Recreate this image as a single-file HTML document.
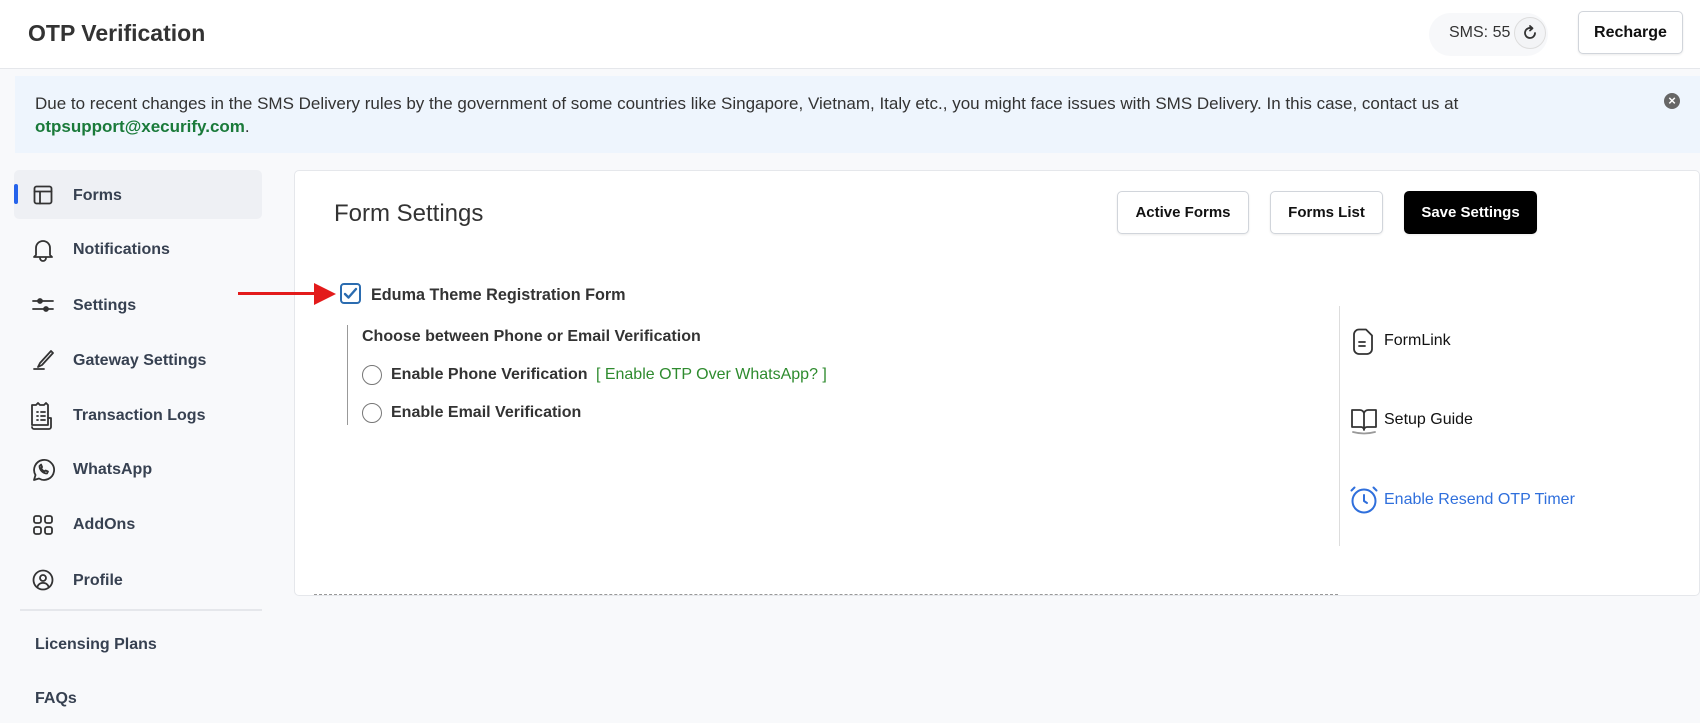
<!DOCTYPE html>
<html><head><meta charset="utf-8"><style>
*{box-sizing:border-box;margin:0;padding:0}
body{width:1700px;height:723px;background:#f8f9fb;font-family:"Liberation Sans",sans-serif;color:#374151;position:relative;overflow:hidden}
.a{position:absolute}
.hdr{left:0;top:0;width:1700px;height:69px;background:#fff;border-bottom:1px solid #e5e7eb}
.nav{font-size:16px;font-weight:bold;color:#374151}
.btn{position:absolute;border:1px solid #d1d5db;border-radius:5px;background:#fff;font-weight:bold;font-size:15px;color:#111;display:flex;align-items:center;justify-content:center;box-shadow:0 1px 2px rgba(0,0,0,.08)}
svg{position:absolute;fill:none;stroke:#333;stroke-width:1.8;stroke-linecap:round;stroke-linejoin:round}
</style></head><body>
<div class="a hdr"></div>
<div class="a" style="left:28px;top:20px;font-size:23px;font-weight:bold;color:#333">OTP Verification</div>
<div class="a" style="left:1429px;top:13px;width:119px;height:43px;border-radius:22px;background:#f7f8fa"></div>
<div class="a" style="left:1449px;top:24px;font-size:16px;color:#333">SMS: 55</div>
<div class="a" style="left:1514px;top:17px;width:32px;height:32px;border-radius:50%;border:1px solid #ddd;background:#f3f4f6"></div>
<svg style="left:1520px;top:23px" width="20" height="20" viewBox="0 0 20 20"><path d="M15 10a5 5 0 1 1-3-4.6"/><path d="M10 3l2.5 2.3L10 7.5"/></svg>
<div class="btn" style="left:1578px;top:11px;width:105px;height:43px;font-size:16px">Recharge</div>

<div class="a" style="left:15px;top:76px;width:1685px;height:77px;background:#eef5fd"></div>
<div class="a" style="left:35px;top:92px;width:1520px;font-size:17px;line-height:23px;color:#333">Due to recent changes in the SMS Delivery rules by the government of some countries like Singapore, Vietnam, Italy etc., you might face issues with SMS Delivery. In this case, contact us at<br><span style="color:#1a7a3a;font-weight:bold">otpsupport@xecurify.com</span>.</div>
<div class="a" style="left:1664px;top:93px;width:16px;height:16px;border-radius:50%;background:#666;color:#fff;font-size:13px;line-height:16px;text-align:center;font-weight:bold">×</div>

<div class="a" style="left:14px;top:170px;width:248px;height:49px;background:#eef0f4;border-radius:5px"></div>
<div class="a" style="left:14px;top:184px;width:4px;height:20px;background:#2563eb;border-radius:2px"></div>
<svg style="left:33px;top:185px" width="20" height="20" viewBox="0 0 20 20"><rect x="1.5" y="1.5" width="17" height="17" rx="2"/><path d="M1.5 6.5h17M7 6.5v12"/></svg>
<div class="a nav" style="left:73px;top:187px">Forms</div>
<svg style="left:32px;top:238px" width="22" height="24" viewBox="0 0 22 24"><path d="M4 17V10a7 7 0 0 1 14 0v7l2 2H2z"/><path d="M8 20a3 3 0 0 0 6 0"/></svg>
<div class="a nav" style="left:73px;top:241px">Notifications</div>
<svg style="left:32px;top:295px" width="22" height="20" viewBox="0 0 22 20"><path d="M1 6h20M1 14h20"/><circle cx="8" cy="6" r="2" fill="#333"/><circle cx="14" cy="14" r="2" fill="#333"/></svg>
<div class="a nav" style="left:73px;top:297px">Settings</div>
<svg style="left:32px;top:349px" width="22" height="22" viewBox="0 0 22 22"><path d="M19 2L8 14l-2 4 4-2L21 4z"/><path d="M2 20h10"/></svg>
<div class="a nav" style="left:73px;top:352px">Gateway Settings</div>
<svg style="left:29px;top:402px" width="26" height="28" viewBox="0 0 26 28"><path d="M3 3h4l2-2 2 2h4l2-2 2 2v20H3z"/><path d="M19 16h3v9a2 2 0 0 1-2 2H5a2 2 0 0 1-2-2"/><path d="M8 10h1M12 10h4M8 14h1M12 14h4M8 18h1M12 18h4"/></svg>
<div class="a nav" style="left:73px;top:407px">Transaction Logs</div>
<svg style="left:31px;top:458px" width="24" height="24" viewBox="0 0 24 24"><path d="M3 22l1.5-5A10 10 0 1 1 8 20.5z"/><path d="M8.5 8c0 4 3.5 7.5 7.5 7.5l1-2-2.5-1-1 1c-1.5-.7-2.7-1.9-3.4-3.4l1-1-1-2.5z"/></svg>
<div class="a nav" style="left:73px;top:461px">WhatsApp</div>
<svg style="left:33px;top:515px" width="20" height="20" viewBox="0 0 20 20"><rect x="1" y="1" width="7" height="7" rx="2"/><rect x="12" y="1" width="7" height="7" rx="2"/><rect x="1" y="12" width="7" height="7" rx="2"/><rect x="12" y="12" width="7" height="7" rx="2"/></svg>
<div class="a nav" style="left:73px;top:516px">AddOns</div>
<svg style="left:32px;top:569px" width="22" height="22" viewBox="0 0 22 22"><circle cx="11" cy="11" r="9.5"/><circle cx="11" cy="9" r="3"/><path d="M5.5 17.5a6 6 0 0 1 11 0"/></svg>
<div class="a nav" style="left:73px;top:572px">Profile</div>
<div class="a" style="left:20px;top:609px;width:242px;height:2px;background:#e5e7eb"></div>
<div class="a nav" style="left:35px;top:636px">Licensing Plans</div>
<div class="a nav" style="left:35px;top:690px">FAQs</div>

<div class="a" style="left:294px;top:170px;width:1406px;height:426px;background:#fff;border:1px solid #e5e7eb;border-radius:5px"></div>
<div class="a" style="left:334px;top:200px;font-size:24px;color:#333">Form Settings</div>
<div class="btn" style="left:1117px;top:191px;width:132px;height:43px">Active Forms</div>
<div class="btn" style="left:1270px;top:191px;width:113px;height:43px">Forms List</div>
<div class="btn" style="left:1404px;top:191px;width:133px;height:43px;background:#000;color:#fff;border-color:#000">Save Settings</div>

<div class="a" style="left:238px;top:292px;width:80px;height:3px;background:#e31b1b"></div>
<div class="a" style="left:314px;top:283px;width:0;height:0;border-top:11px solid transparent;border-bottom:11px solid transparent;border-left:22px solid #e31b1b"></div>
<div class="a" style="left:340px;top:283px;width:21px;height:21px;border:2px solid #2b6cb0;border-radius:4px"></div>
<svg style="left:343px;top:286px;stroke:#2b6cb0;stroke-width:2.4" width="15" height="15" viewBox="0 0 15 15"><path d="M2 8l3.5 3.5L13 3"/></svg>
<div class="a" style="left:371px;top:286px;font-size:16.2px;font-weight:bold;color:#333">Eduma Theme Registration Form</div>
<div class="a" style="left:347px;top:325px;width:1px;height:100px;background:#999"></div>
<div class="a" style="left:362px;top:328px;font-size:16px;font-weight:bold;color:#333">Choose between Phone or Email Verification</div>
<div class="a" style="left:362px;top:365px;width:20px;height:20px;border:1px solid #777;border-radius:50%"></div>
<div class="a" style="left:391px;top:366px;font-size:16px;font-weight:bold;color:#333">Enable Phone Verification <span style="color:#2e8b2e;font-weight:normal;margin-left:4px">[ Enable OTP Over WhatsApp? ]</span></div>
<div class="a" style="left:362px;top:403px;width:20px;height:20px;border:1px solid #777;border-radius:50%"></div>
<div class="a" style="left:391px;top:404px;font-size:16px;font-weight:bold;color:#333">Enable Email Verification</div>

<div class="a" style="left:1339px;top:306px;width:1px;height:240px;background:#ddd"></div>
<svg style="left:1352px;top:328px" width="22" height="28" viewBox="0 0 22 28"><path d="M7 1.5h7l6 6V21a5 5 0 0 1-5 5H7a5 5 0 0 1-5-5V6.5a5 5 0 0 1 5-5z"/><path d="M7 14h6M7 18h6"/></svg>
<div class="a" style="left:1384px;top:332px;font-size:16px;color:#111">FormLink</div>
<svg style="left:1350px;top:407px" width="28" height="28" viewBox="0 0 28 28"><path d="M2 3h8a4 4 0 0 1 4 4v16a3 3 0 0 0-3-3H2zM26 3h-8a4 4 0 0 0-4 4v16a3 3 0 0 1 3-3h9z"/><path d="M3 25q11 3 22 0" stroke="#999"/></svg>
<div class="a" style="left:1384px;top:411px;font-size:16px;color:#111">Setup Guide</div>
<svg style="left:1349px;top:485px;stroke:#2f6fdc;stroke-width:2" width="30" height="30" viewBox="0 0 30 30"><circle cx="15" cy="16" r="11.5"/><path d="M15 10v6l3 2M2.5 5.5l3-3M27.5 5.5l-3-3"/></svg>
<div class="a" style="left:1384px;top:491px;font-size:16px;color:#2f6fdc">Enable Resend OTP Timer</div>
<div class="a" style="left:314px;top:594px;width:1024px;border-top:1px dashed #999"></div>
</body></html>
